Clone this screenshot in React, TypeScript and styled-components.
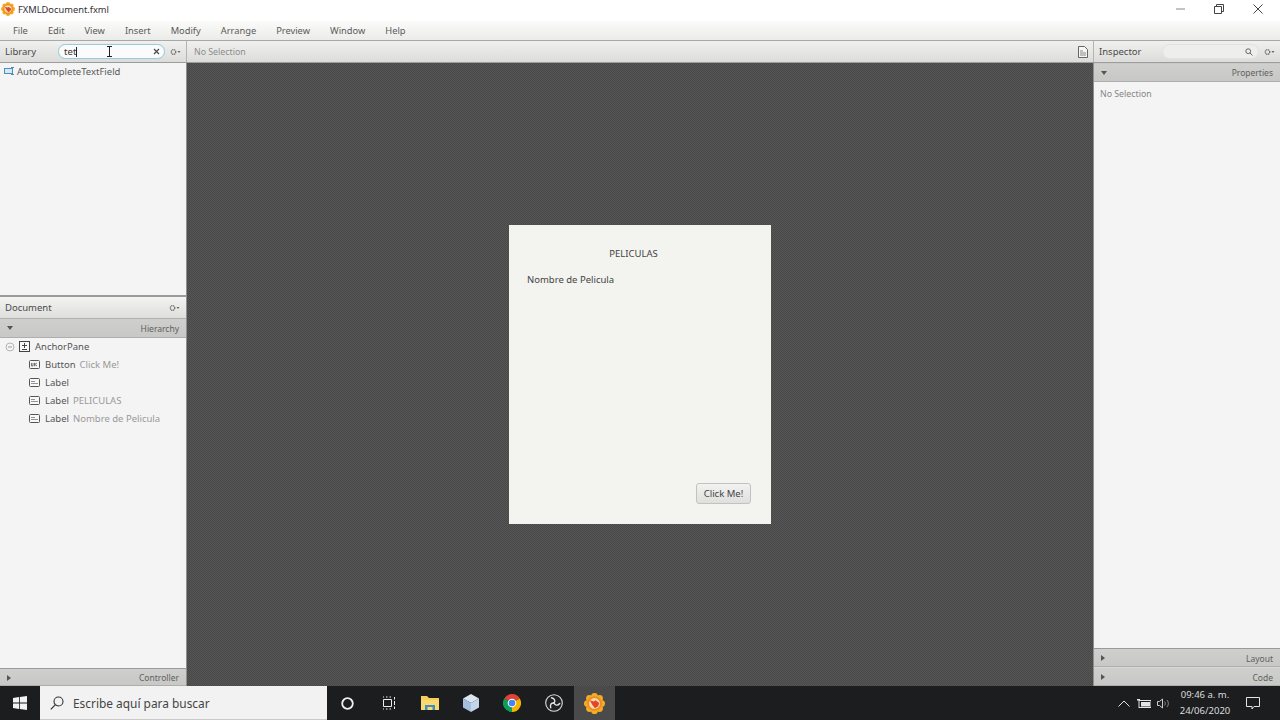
import React from 'react';
import styled, { createGlobalStyle } from 'styled-components';

const GlobalStyle = createGlobalStyle`
  html, body, #root {
    margin: 0;
    padding: 0;
    width: 1280px;
    height: 720px;
    overflow: hidden;
  }
  body {
    font-family: "Noto Sans", "Open Sans", sans-serif;
    font-size: 9.5px;
    color: #3a3a3a;
    background: #f4f4f4;
  }
`;

const Page = styled.div`
  width: 1280px;
  height: 720px;
  display: flex;
  flex-direction: column;
`;

const TitleBar = styled.div`
  height: 21px;
  background: #fff;
  display: flex;
  align-items: flex-start;
  padding: 2px 3px 0 1px;
  box-sizing: border-box;
  color: #333;
`;

const TitleText = styled.span`
  flex: 1;
  margin-left: 3px;
  padding-top: 1px;
  line-height: 14px;
  font-size: 9.3px;
`;

const WinButton = styled.div`
  width: 38.5px;
  height: 14px;
  display: flex;
  align-items: center;
  justify-content: center;
`;

const MenuBar = styled.div`
  height: 20px;
  box-sizing: border-box;
  padding: 0 0 1px 13px;
  display: flex;
  align-items: center;
  gap: 20px;
  background: linear-gradient(#fbfbfa, #ebebe9);
  font-size: 9.3px;
  color: #5a5a5a;
  border-bottom: 1px solid #a8a8a8;
`;

const ToolRow = styled.div`
  height: 22px;
  display: flex;
  background: linear-gradient(#f0f0ee, #dcdcda);
  border-bottom: 1px solid #9d9d9d;
  box-sizing: border-box;
`;

const LibraryTools = styled.div`
  width: 187px;
  flex: none;
  box-sizing: border-box;
  display: flex;
  align-items: center;
  padding-left: 5px;
  border-right: 1px solid #b4b4b4;
  color: #4a4a4a;
`;

const SearchBox = styled.div`
  width: 107px;
  height: 15px;
  margin-left: 22px;
  border: 1px solid #9cc9dc;
  box-shadow: 0 0 1px #b8deee;
  border-radius: 8px;
  background: #fbfbfb;
  display: flex;
  align-items: center;
  padding: 0 4px 0 5px;
  box-sizing: border-box;
  color: #333;
  position: relative;
`;

const Caret = styled.span`
  width: 1px;
  height: 10px;
  background: #222;
`;

const Clear = styled.span`
  margin-left: auto;
  display: flex;
`;

const IBeam = styled.svg`
  position: absolute;
  left: 47px;
  top: 1px;
`;

const GearSlot = styled.span`
  display: flex;
  margin-left: 5px;
`;

const CenterTools = styled.div`
  flex: 1;
  display: flex;
  align-items: center;
  justify-content: space-between;
  padding: 0 5px 0 7px;
  font-size: 8.8px;
  color: #8c8c8c;
`;

const InspectorTools = styled.div`
  width: 187px;
  flex: none;
  box-sizing: border-box;
  display: flex;
  align-items: center;
  padding-left: 5px;
  border-left: 1px solid #b4b4b4;
  color: #4a4a4a;
`;

const InspectorSearch = styled.div`
  width: 97px;
  height: 15px;
  margin-left: 20px;
  border: 1px solid #e2e2e0;
  border-radius: 8px;
  background: #eeeeec;
  display: flex;
  align-items: center;
  justify-content: flex-end;
  padding-right: 5px;
  box-sizing: border-box;
`;

const Workspace = styled.div`
  height: 623px;
  display: flex;
`;

const SidePanel = styled.div`
  width: 187px;
  flex: none;
  box-sizing: border-box;
  display: flex;
  flex-direction: column;
  background: #f4f4f4;
  border-${p => p.$side}: 1px solid #8f8f8f;
`;

const LibraryList = styled.div`
  height: 234px;
  padding: 2px 0 0 4px;
  box-sizing: border-box;
  border-bottom: 2px solid #9a9a9a;
`;

const LibraryItem = styled.div`
  display: flex;
  align-items: center;
  gap: 2px;
  height: 12px;
  font-size: 9.5px;
  color: #5a5a5a;
`;

const SectionHeader = styled.div`
  height: 21px;
  flex: none;
  display: flex;
  align-items: center;
  justify-content: space-between;
  padding: 0 6px 0 5px;
  background: linear-gradient(#f3f3f1, #dededc);
  color: #4a4a4a;
`;

const FoldBar = styled.div`
  height: ${p => p.$h}px;
  flex: none;
  box-sizing: border-box;
  display: flex;
  align-items: center;
  justify-content: space-between;
  padding: ${p => p.$shift ?? 0}px 7px 0 7px;
  background: linear-gradient(#cfcfcd, #c8c8c6);
  border-top: 1px solid ${p => p.$top ?? '#b0b0b0'};
  border-bottom: 1px solid #aeaeae;
  font-size: 8.5px;
  color: #5f5f5f;
`;

const Tree = styled.div`
  flex: 1;
`;

const TreeRow = styled.div`
  height: ${p => p.$h ?? 18}px;
  display: flex;
  align-items: center;
  padding-left: ${p => p.$indent}px;
  color: #555;
  gap: 4px;
`;

const TreeName = styled.span`
  margin-left: 1px;
`;

const TreeNote = styled.span`
  color: #999;
`;

const Canvas = styled.div`
  flex: 1;
  display: flex;
  align-items: center;
  justify-content: center;
  background-color: #4f4f4f;
  background-image: conic-gradient(#565656 25%, #484848 0 50%, #565656 0 75%, #484848 0);
  background-size: 2px 2px;
`;

const Stage = styled.div`
  width: 262px;
  height: 299px;
  box-sizing: border-box;
  background: #f3f3ef;
  display: flex;
  flex-direction: column;
  padding: 22px 20px 20px 18px;
  color: #444;
`;

const StageTitle = styled.div`
  text-align: center;
  padding-right: 11px;
  height: 14px;
  line-height: 14px;
`;

const StageLabel = styled.div`
  margin-top: 12px;
  height: 14px;
  line-height: 14px;
`;

const StageButton = styled.button`
  margin-top: auto;
  align-self: flex-end;
  width: 55px;
  height: 21px;
  padding: 0;
  border: 1px solid #c2c2c0;
  border-radius: 3px;
  background: linear-gradient(#f2f2f0, #dfdfdd);
  font: inherit;
  color: #444;
`;

const InspectorNote = styled.div`
  padding: 6px 0 0 6px;
  font-size: 8.8px;
  color: #868686;
  flex: 1;
`;

const Taskbar = styled.div`
  height: 34px;
  flex: none;
  display: flex;
  align-items: stretch;
  background: #1b1d1f;
  color: #e8e8e8;
`;

const StartButton = styled.div`
  width: 40px;
  display: flex;
  align-items: center;
  justify-content: center;
`;

const SearchBar = styled.div`
  width: 287px;
  box-sizing: border-box;
  background: #f2f2f2;
  border-bottom: 1px solid #c9c9c9;
  display: flex;
  align-items: center;
  gap: 9px;
  padding: 1px 0 0 10px;
  font-size: 11.9px;
  color: #444;
`;

const TaskIcon = styled.div`
  width: 41.2px;
  display: flex;
  align-items: center;
  justify-content: center;
  background: ${p => (p.$active ? '#4a4a4a' : 'transparent')};
`;

const Tray = styled.div`
  margin-left: auto;
  display: flex;
  align-items: center;
`;

const TrayIcon = styled.span`
  display: flex;
  width: ${p => p.$w}px;
  justify-content: center;
`;

const Clock = styled.div`
  width: 56px;
  margin-left: 6px;
  text-align: center;
  font-size: 9.5px;
  line-height: 16px;
  color: #dcdcdc;
`;

const Notify = styled.div`
  width: 47px;
  height: 100%;
  display: flex;
  align-items: center;
  justify-content: center;
  padding-right: 7px;
  box-sizing: border-box;
`;

const Gear = () => (
  <svg width="11" height="8" viewBox="0 0 11 8" fill="none">
    <circle cx="3.5" cy="4" r="2.3" stroke="#666" strokeWidth="1.2" strokeDasharray="1.2 0.5" />
    <path d="M7.5 3h3L9 5z" fill="#666" />
  </svg>
);

const Down = () => (
  <svg width="6" height="4" viewBox="0 0 6 4"><path d="M0 0h6L3 4z" fill="#555" /></svg>
);

const Right = () => (
  <svg width="4" height="6" viewBox="0 0 4 6"><path d="M0 0l4 3-4 3z" fill="#555" /></svg>
);

const bumps = [0, 45, 90, 135, 180, 225, 270, 315];

const SceneLogo = ({ size }: { size: number }) => (
  <svg width={size} height={size} viewBox="0 0 20 20">
    {bumps.map(a => (
      <circle
        key={a}
        cx={10 + 6.8 * Math.cos((a * Math.PI) / 180)}
        cy={10 + 6.8 * Math.sin((a * Math.PI) / 180)}
        r="3.2"
        fill="#f4ac25"
      />
    ))}
    <circle cx="10" cy="10" r="7" fill="#ef8a1d" />
    <circle cx="10" cy="10" r="5.2" fill="#fbdcae" />
    <path d="M5.5 7l4 1 1.500-1 3.500 2.500-1 3-3 2-2.500-3z" fill="#e2452a" />
  </svg>
);

const NodeIcon = ({ ok }: { ok?: boolean }) => (
  <svg width="11" height="9" viewBox="0 0 11 9" fill="none">
    <rect x="0.5" y="0.5" width="10" height="8" rx="1" stroke="#555" fill="#f7f7f7" />
    {ok ? (
      <path d="M2.5 3v3h1.500V3M5.5 2.800v3.400M8 3L5.800 4.500 8 6" stroke="#555" strokeWidth="0.8" />
    ) : (
      <path d="M2 5.500h7M2 3.500h4" stroke="#888" strokeWidth="0.9" />
    )}
  </svg>
);

const hierarchy = [
  { name: 'Button', note: 'Click Me!', ok: true },
  { name: 'Label', note: '' },
  { name: 'Label', note: 'PELICULAS' },
  { name: 'Label', note: 'Nombre de Pelicula' },
];

export default function App() {
  return (
    <Page>
      <GlobalStyle />
      <TitleBar>
        <SceneLogo size={14} />
        <TitleText>FXMLDocument.fxml</TitleText>
        <WinButton>
          <svg width="10" height="10" viewBox="0 0 10 10"><path d="M0 5h9" stroke="#888" /></svg>
        </WinButton>
        <WinButton>
          <svg width="10" height="10" viewBox="0 0 10 10" fill="none">
            <path d="M2.500 2.500V.5h7v7h-2M.5 2.500h7v7h-7z" stroke="#444" />
          </svg>
        </WinButton>
        <WinButton>
          <svg width="10" height="10" viewBox="0 0 10 10"><path d="M.5.5l9 9M9.500.5l-9 9" stroke="#444" /></svg>
        </WinButton>
      </TitleBar>
      <MenuBar>
        {['File', 'Edit', 'View', 'Insert', 'Modify', 'Arrange', 'Preview', 'Window', 'Help'].map(m => (
          <span key={m}>{m}</span>
        ))}
      </MenuBar>
      <ToolRow>
        <LibraryTools>
          <span>Library</span>
          <SearchBox>
            tet<Caret />
            <IBeam width="7" height="11" viewBox="0 0 7 11" fill="none">
              <path d="M1 .5h5M1 10.500h5M3.500 .5v10" stroke="#222" />
            </IBeam>
            <Clear>
              <svg width="7" height="7" viewBox="0 0 7 7"><path d="M1 1l5 5M6 1L1 6" stroke="#444" strokeWidth="1.1" /></svg>
            </Clear>
          </SearchBox>
          <GearSlot><Gear /></GearSlot>
        </LibraryTools>
        <CenterTools>
          <span>No Selection</span>
          <svg width="10" height="12" viewBox="0 0 10 12" fill="none">
            <path d="M.5.5h6l3 3v8h-9z" stroke="#666" fill="#f6f6f6" />
            <path d="M2 5h3M2 7h6M2 9h6" stroke="#888" />
          </svg>
        </CenterTools>
        <InspectorTools>
          <span>Inspector</span>
          <InspectorSearch>
            <svg width="8" height="8" viewBox="0 0 8 8" fill="none">
              <circle cx="3.2" cy="3.2" r="2.4" stroke="#666" />
              <path d="M5 5l2.500 2.500" stroke="#666" />
            </svg>
          </InspectorSearch>
          <GearSlot><Gear /></GearSlot>
        </InspectorTools>
      </ToolRow>
      <Workspace>
        <SidePanel $side="right">
          <LibraryList>
            <LibraryItem>
              <svg width="11" height="8" viewBox="0 0 11 8" fill="none">
                <rect x="0.5" y="1.5" width="8" height="5" stroke="#4a90b8" fill="#d5e8f3" />
                <path d="M8.500 .5v7M7 .5h3M7 7.500h3" stroke="#4a90b8" />
              </svg>
              AutoCompleteTextField
            </LibraryItem>
          </LibraryList>
          <SectionHeader>
            <span>Document</span>
            <Gear />
          </SectionHeader>
          <FoldBar $h={20}>
            <Down />
            <span>Hierarchy</span>
          </FoldBar>
          <Tree>
            <TreeRow $indent={5} $h={17}>
              <svg width="10" height="10" viewBox="0 0 10 10" fill="none">
                <circle cx="5" cy="5" r="4" stroke="#b5b5b5" />
                <path d="M3 5h4" stroke="#999" />
              </svg>
              <svg width="11" height="11" viewBox="0 0 11 11" fill="none">
                <rect x="0.5" y="0.5" width="10" height="10" stroke="#444" fill="#f7f7f7" />
                <path d="M5.500 2v5M3 4.500h5M3 8.500h5" stroke="#444" />
              </svg>
              <TreeName>AnchorPane</TreeName>
            </TreeRow>
            {hierarchy.map(item => (
              <TreeRow key={item.name + item.note} $indent={29}>
                <NodeIcon ok={item.ok} />
                <TreeName>{item.name}</TreeName>
                {item.note && <TreeNote>{item.note}</TreeNote>}
              </TreeRow>
            ))}
          </Tree>
          <FoldBar $h={18} $top="#9a9a9a" $shift={1}>
            <Right />
            <span>Controller</span>
          </FoldBar>
        </SidePanel>
        <Canvas>
          <Stage>
            <StageTitle>PELICULAS</StageTitle>
            <StageLabel>Nombre de Pelicula</StageLabel>
            <StageButton>Click Me!</StageButton>
          </Stage>
        </Canvas>
        <SidePanel $side="left">
          <FoldBar $h={19} $top="transparent">
            <Down />
            <span>Properties</span>
          </FoldBar>
          <InspectorNote>No Selection</InspectorNote>
          <FoldBar $h={19} $top="#9a9a9a" $shift={1}>
            <Right />
            <span>Layout</span>
          </FoldBar>
          <FoldBar $h={19} $top="#d8d8d8" $shift={1}>
            <Right />
            <span>Code</span>
          </FoldBar>
        </SidePanel>
      </Workspace>
      <Taskbar>
        <StartButton>
          <svg width="14" height="14" viewBox="0 0 14 14" fill="#f2f2f2">
            <path d="M0 2l6-.9v5.500H0zM6.800 1L14 0v6.600H6.800zM0 7.400h6v5.500L0 12zM6.800 7.400H14V14l-7.200-1z" />
          </svg>
        </StartButton>
        <SearchBar>
          <svg width="14" height="14" viewBox="0 0 14 14" fill="none">
            <circle cx="8.5" cy="5.5" r="4.5" stroke="#333" strokeWidth="1.1" />
            <path d="M5.200 8.800L.8 13.300" stroke="#333" strokeWidth="1.2" />
          </svg>
          Escribe aquí para buscar
        </SearchBar>
        <TaskIcon>
          <svg width="13" height="13" viewBox="0 0 13 13" fill="none">
            <circle cx="6.5" cy="6.5" r="5.3" stroke="#f0f0f0" strokeWidth="1.8" />
          </svg>
        </TaskIcon>
        <TaskIcon>
          <svg width="14" height="14" viewBox="0 0 14 14" fill="none" stroke="#eee">
            <path d="M1.500 3.500h8v7h-8zM1 1h1M4 1h1.500M7.500 1H9M1 13h1M4 13h1.500M7.500 13H9M12.500 1v2.500M12.500 5v4M12.500 10.500V13" />
          </svg>
        </TaskIcon>
        <TaskIcon>
          <svg width="18" height="16" viewBox="0 0 18 16">
            <path d="M0 1h6l2 2h10v12H0z" fill="#f7ce5c" />
            <rect x="0" y="5" width="18" height="10" fill="#fbd970" />
            <path d="M4 15v-5h10v5h-2.500v-3h-5v3z" fill="#3a8fc6" />
          </svg>
        </TaskIcon>
        <TaskIcon>
          <svg width="16" height="18" viewBox="0 0 16 18">
            <path d="M8 0l8 4.500-8 4.500L0 4.500z" fill="#dbe6f2" />
            <path d="M0 4.500l8 4.500v9l-8-4.500z" fill="#a5bfe0" />
            <path d="M16 4.500L8 9v9l8-4.500z" fill="#c6d6ea" />
          </svg>
        </TaskIcon>
        <TaskIcon>
          <svg width="18" height="18" viewBox="0 0 18 18">
            <path d="M9 9L1.200 4.500A9 9 0 0 1 16.800 4.500z" fill="#db4437" />
            <path d="M9 9l7.800-4.500A9 9 0 0 1 9 18z" fill="#f4b400" />
            <path d="M9 9v9A9 9 0 0 1 1.200 4.500z" fill="#0f9d58" />
            <circle cx="9" cy="9" r="4.3" fill="#fff" />
            <circle cx="9" cy="9" r="3.3" fill="#4285f4" />
          </svg>
        </TaskIcon>
        <TaskIcon>
          <svg width="18" height="18" viewBox="0 0 18 18" fill="none">
            <circle cx="9" cy="9" r="8.3" stroke="#dedede" strokeWidth="1.1" fill="#202224" />
            {[0, 120, 240].map(a => (
              <path
                key={a}
                d="M9 9C10.500 7 10 4.500 6.500 3.800"
                stroke="#e4e4e4"
                strokeWidth="1.4"
                strokeLinecap="round"
                transform={`rotate(${a} 9 9)`}
              />
            ))}
          </svg>
        </TaskIcon>
        <TaskIcon $active>
          <SceneLogo size={21} />
        </TaskIcon>
        <Tray>
          <TrayIcon $w={18}>
            <svg width="12" height="7" viewBox="0 0 12 7" fill="none"><path d="M.5 6.500L6 1l5.500 5.500" stroke="#e4e4e4" /></svg>
          </TrayIcon>
          <TrayIcon $w={22}>
            <svg width="14" height="9" viewBox="0 0 14 9">
              <rect x="2" y="1.5" width="12" height="7" fill="none" stroke="#e4e4e4" />
              <rect x="4" y="3" width="9" height="4.5" fill="#e4e4e4" />
              <path d="M0 0h3v1.500H0z" fill="#e4e4e4" />
            </svg>
          </TrayIcon>
          <TrayIcon $w={16}>
            <svg width="13" height="11" viewBox="0 0 13 11" fill="none" stroke="#cfcfcf">
              <path d="M.5 3.500h2l3-2.500v9l-3-2.500h-2z" />
              <path d="M7.500 3.500c1 1 1 3 0 4M10 2c1.800 2 1.800 5 0 7" opacity=".6" />
            </svg>
          </TrayIcon>
          <Clock>
            09:46 a. m.
            <br />
            24/06/2020
          </Clock>
          <Notify>
            <svg width="14" height="13" viewBox="0 0 14 13" fill="none">
              <path d="M.5.5h13v9H8l-2 2.500V9.500H.5z" stroke="#e4e4e4" />
            </svg>
          </Notify>
        </Tray>
      </Taskbar>
    </Page>
  );
}
